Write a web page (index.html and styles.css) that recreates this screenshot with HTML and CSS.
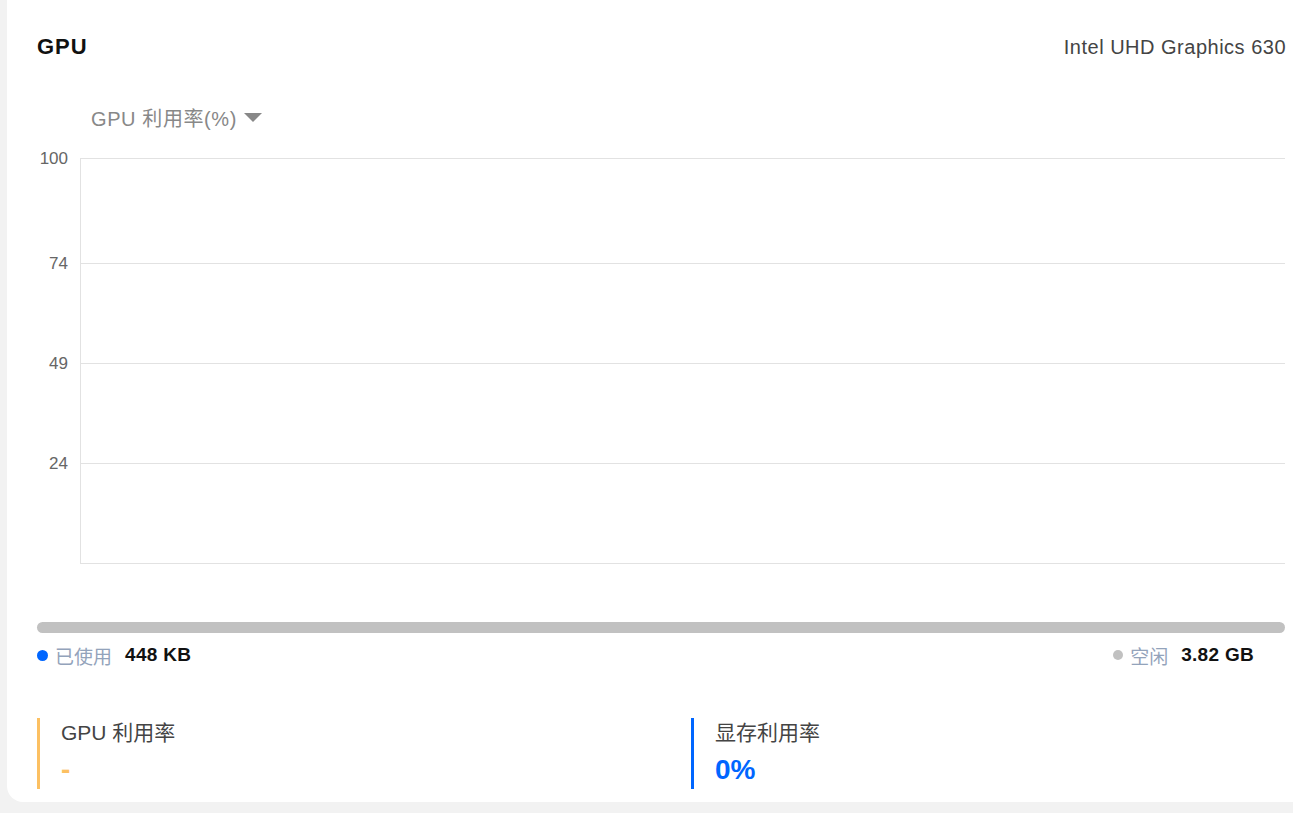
FILE: index.html
```html
<!DOCTYPE html>
<html lang="zh-CN">
<head>
<meta charset="utf-8">
<title>GPU</title>
<link rel="stylesheet" href="styles.css">
</head>
<body>
<div class="card">
  <div class="header">
    <h2 class="title">GPU</h2>
    <span class="model">Intel UHD Graphics 630</span>
  </div>

  <div class="chart-title">
    <span>GPU 利用率(%)</span>
    <svg class="caret" width="18" height="10" viewBox="0 0 18 10"><path d="M0 0 H18 L9 9 Z" fill="#888"/></svg>
  </div>

  <div class="chart">
    <div class="axis">
      <div class="tick t1"><span>100</span></div>
      <div class="tick"><span>74</span></div>
      <div class="tick"><span>49</span></div>
      <div class="tick"><span>24</span></div>
    </div>
    <div class="plot">
      <div class="row r1"></div>
      <div class="row"></div>
      <div class="row"></div>
      <div class="row"></div>
    </div>
  </div>

  <div class="bar"></div>

  <div class="legend">
    <div class="item">
      <span class="dot used"></span>
      <span class="lbl">已使用</span>
      <span class="val">448 KB</span>
    </div>
    <div class="item">
      <span class="dot free"></span>
      <span class="lbl">空闲</span>
      <span class="val">3.82 GB</span>
    </div>
  </div>

  <div class="stats">
    <div class="stat orange">
      <div class="stat-name">GPU 利用率</div>
      <div class="stat-val">-</div>
    </div>
    <div class="stat blue">
      <div class="stat-name">显存利用率</div>
      <div class="stat-val">0%</div>
    </div>
  </div>
</div>
</body>
</html>
```

FILE: styles.css
```css
html, body {
  margin: 0;
  padding: 0;
}
body {
  background: #f2f2f2;
  height: 813px;
  overflow: hidden;
  font-family: "Liberation Sans", Arial, "Noto Sans CJK SC", sans-serif;
  color: #333;
}
.card {
  margin-left: 7px;
  background: #fff;
  border-bottom-left-radius: 16px;
  padding: 33px 8px 13px 30px;
  height: 802px;
  box-sizing: border-box;
}
.header {
  display: flex;
  justify-content: space-between;
  align-items: center;
  height: 28px;
}
.title {
  margin: 0;
  font-size: 22px;
  letter-spacing: 1px;
  font-weight: bold;
  color: #111;
}
.model {
  font-size: 20px;
  letter-spacing: 0.5px;
  margin-right: -1px;
  color: #444;
}
.chart-title {
  margin-top: 44px;
  padding-left: 54px;
  height: 24px;
  display: flex;
  align-items: center;
  gap: 7px;
  font-size: 20px;
  letter-spacing: 0.6px;
  color: #888;
}
.caret {
  display: block;
  margin-top: 1px;
}
.chart {
  margin-top: 29px;
  display: flex;
  gap: 12px;
}
.axis {
  width: 31px;
  display: flex;
  flex-direction: column;
}
.tick {
  height: 100px;
  text-align: right;
  font-size: 17px;
  color: #666;
}
.tick.t1 {
  height: 105px;
}
.tick span {
  display: block;
  line-height: 20px;
  margin-top: -9px;
}
.plot {
  flex: 1;
  border-left: 1px solid #e2e2e2;
  border-bottom: 1px solid #e2e2e2;
  display: flex;
  flex-direction: column;
}
.row {
  height: 100px;
  box-sizing: border-box;
  border-top: 1px solid #e2e2e2;
}
.row.r1 {
  height: 105px;
}
.bar {
  margin-top: 58px;
  height: 11px;
  border-radius: 6px;
  background: #c1c1c1;
}
.legend {
  display: flex;
  justify-content: space-between;
  align-items: center;
  padding-right: 31px;
  margin-top: 10px;
  height: 24px;
}
.item {
  display: flex;
  align-items: center;
}
.dot {
  width: 11px;
  height: 11px;
  border-radius: 50%;
  margin-right: 7px;
}
.dot.used { background: #0066ff; }
.dot.free { background: #c1c1c1; width: 10px; height: 10px; }
.lbl {
  font-size: 19px;
  color: #93a3bb;
  margin-right: 13px;
}
.val {
  font-size: 19px;
  letter-spacing: 0.3px;
  font-weight: bold;
  color: #111;
}
.stats {
  margin-top: 51px;
  display: grid;
  grid-template-columns: 654px 1fr;
}
.stat {
  border-left: 3px solid;
  padding-left: 21px;
  height: 71px;
  box-sizing: border-box;
}
.stat.orange { border-color: #fcc062; }
.stat.blue { border-color: #0066ff; }
.stat-name {
  font-size: 21px;
  color: #444;
  line-height: 30px;
}
.stat-val {
  font-size: 28px;
  font-weight: bold;
  line-height: 44px;
}
.orange .stat-val { color: #fcc062; }
.blue .stat-val { color: #0066ff; }
```
